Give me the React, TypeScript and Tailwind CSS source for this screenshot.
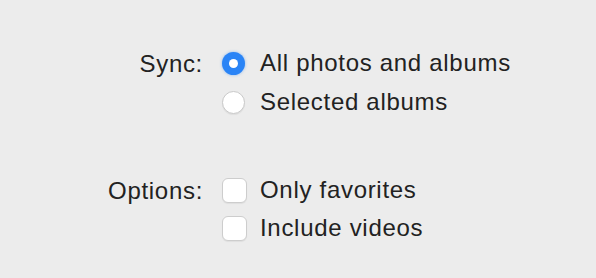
import { useState } from "react";

function Radio({ checked }: { checked: boolean }) {
  return checked ? (
    <span className="grid place-items-center w-[23px] h-[23px] rounded-full bg-[#2a84f6] shadow-[0_0_3px_rgba(42,132,246,0.5)]">
      <span className="w-[9px] h-[9px] rounded-full bg-white" />
    </span>
  ) : (
    <span className="w-[23px] h-[23px] rounded-full bg-white border border-[#c9c9c9] shadow-[0_1px_1px_rgba(0,0,0,0.06)]" />
  );
}

function Checkbox() {
  return (
    <span className="w-[25px] h-[25px] rounded-[6px] bg-white border border-[#cdcdcd] shadow-[0_1px_1px_rgba(0,0,0,0.06)]" />
  );
}

export default function App() {
  const [sync] = useState("all");

  return (
    <div className="w-[596px] h-[278px] bg-[#ececec] text-[#222] font-['Liberation_Sans',Arial,sans-serif] text-[24px] leading-none tracking-[0.7px]">
      <div className="grid grid-cols-[203px_1fr] gap-x-[19px] pt-[50px]">
        <div className="text-right h-[40px] pt-[2px]">Sync:</div>
        <div className="flex flex-col">
          <div className="flex items-center gap-[15px] h-[26px]">
            <Radio checked={sync === "all"} />
            <span>All photos and albums</span>
          </div>
          <div className="flex items-center gap-[15px] h-[26px] mt-[13px]">
            <Radio checked={sync === "selected"} />
            <span>Selected albums</span>
          </div>
        </div>

        <div className="text-right mt-[62px] pt-[2px]">Options:</div>
        <div className="flex flex-col mt-[62px]">
          <div className="flex items-center gap-[13px] h-[26px]">
            <Checkbox />
            <span>Only favorites</span>
          </div>
          <div className="flex items-center gap-[13px] h-[26px] mt-[12px]">
            <Checkbox />
            <span>Include videos</span>
          </div>
        </div>
      </div>
    </div>
  );
}
